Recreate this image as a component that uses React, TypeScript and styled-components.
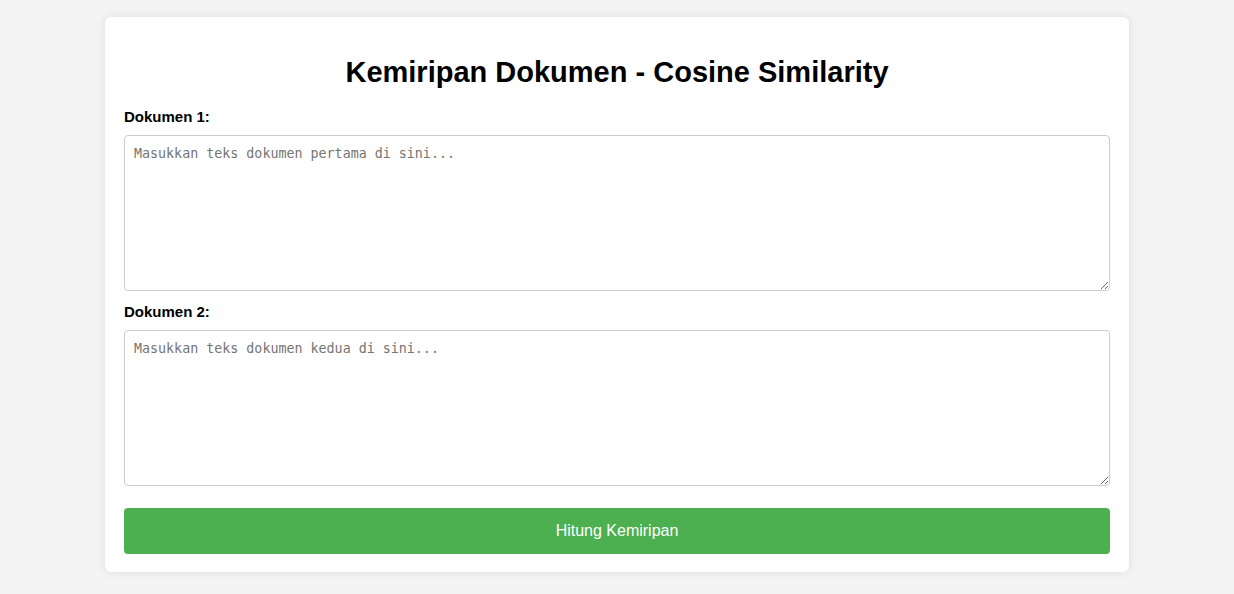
import React from "react";
import styled, { createGlobalStyle } from "styled-components";

const Global = createGlobalStyle`
  html, body { margin: 0; padding: 0; }
  body {
    background: #f4f4f4;
    font-family: Arial, "Liberation Sans", sans-serif;
    padding: 17px 0 20px;
  }
`;

const Card = styled.div`
  box-sizing: border-box;
  width: 1024px;
  margin: 0 auto;
  background: #fff;
  padding: 0 19px 18px;
  border-radius: 6px;
  box-shadow: 0 0 10px rgba(0, 0, 0, 0.1);
  display: flow-root;
`;

const Title = styled.h1`
  font-size: 29px;
  font-weight: bold;
  text-align: center;
  color: #000;
  margin: 39px 0 19px;
`;

const Label = styled.label`
  display: block;
  font-weight: bold;
  font-size: 15px;
  color: #000;
  margin-bottom: 10px;
`;

const Area = styled.textarea<{ $mb?: number }>`
  display: block;
  box-sizing: border-box;
  width: 100%;
  height: 156px;
  padding: 10px 9px;
  border: 1px solid #ccc;
  border-radius: 4px;
  font-family: "DejaVu Sans Mono", monospace;
  font-size: 13.333px;
  margin-bottom: ${(p) => p.$mb ?? 12}px;
  &::placeholder { color: #757575; }
`;

const Button = styled.button`
  display: block;
  width: 100%;
  height: 46px;
  border: none;
  border-radius: 4px;
  background: #4caf50;
  color: #fff;
  font-family: Arial, "Liberation Sans", sans-serif;
  font-size: 16px;
  cursor: pointer;
`;

export default function App() {
  return (
    <>
      <Global />
      <Card>
        <Title>Kemiripan Dokumen - Cosine Similarity</Title>
        <Label htmlFor="d1">Dokumen 1:</Label>
        <Area id="d1" placeholder="Masukkan teks dokumen pertama di sini..." />
        <Label htmlFor="d2">Dokumen 2:</Label>
        <Area id="d2" $mb={22} placeholder="Masukkan teks dokumen kedua di sini..." />
        <Button>Hitung Kemiripan</Button>
      </Card>
    </>
  );
}
